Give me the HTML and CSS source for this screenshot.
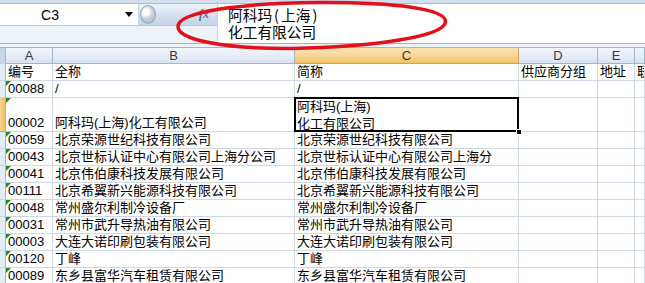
FILE: index.html
```html
<!DOCTYPE html>
<html lang="zh">
<head>
<meta charset="utf-8">
<title>Excel</title>
<link rel="stylesheet" href="styles.css">
</head>
<body>
<div class="app">
  <div class="formulabar">
    <div class="leftpane">
      <div class="namerow">
        <div class="namebox"><span class="ref">C3</span><span class="drop"></span></div>
        <div class="knobbar">
          <span class="knob"></span>
          <span class="fx">fx</span>
        </div>
      </div>
      <div class="below"></div>
    </div>
    <div class="input">
      <div>阿科玛<span class="p">(</span>上海<span class="p">)</span></div>
      <div>化工有限公司</div>
    </div>
  </div>
  <div class="gap"></div>
  <div class="sheet">
    <div class="rh corner"></div>
    <div class="ch">A</div>
    <div class="ch">B</div>
    <div class="ch chsel">C</div>
    <div class="ch">D</div>
    <div class="ch">E</div>
    <div class="ch"></div>

    <div class="rh"></div>
    <div class="c">编号</div><div class="c">全称</div><div class="c">简称</div><div class="c">供应商分组</div><div class="c">地址</div><div class="c">联系</div>

    <div class="rh"></div>
    <div class="c t">00088</div><div class="c">/</div><div class="c">/</div><div class="c"></div><div class="c"></div><div class="c"></div>

    <div class="rh rhsel tall"></div>
    <div class="c t tall">00002</div><div class="c tall">阿科玛(上海)化工有限公司</div><div class="c tall sel"><div class="wrap">阿科玛(上海)<br>化工有限公司</div><span class="handle"></span></div><div class="c tall"></div><div class="c tall"></div><div class="c tall"></div>

    <div class="rh"></div>
    <div class="c t">00059</div><div class="c">北京荣源世纪科技有限公司</div><div class="c">北京荣源世纪科技有限公司</div><div class="c"></div><div class="c"></div><div class="c"></div>

    <div class="rh"></div>
    <div class="c t">00043</div><div class="c">北京世标认证中心有限公司上海分公司</div><div class="c">北京世标认证中心有限公司上海分</div><div class="c"></div><div class="c"></div><div class="c"></div>

    <div class="rh"></div>
    <div class="c t">00041</div><div class="c">北京伟伯康科技发展有限公司</div><div class="c">北京伟伯康科技发展有限公司</div><div class="c"></div><div class="c"></div><div class="c"></div>

    <div class="rh"></div>
    <div class="c t">00111</div><div class="c">北京希翼新兴能源科技有限公司</div><div class="c">北京希翼新兴能源科技有限公司</div><div class="c"></div><div class="c"></div><div class="c"></div>

    <div class="rh"></div>
    <div class="c t">00048</div><div class="c">常州盛尔利制冷设备厂</div><div class="c">常州盛尔利制冷设备厂</div><div class="c"></div><div class="c"></div><div class="c"></div>

    <div class="rh"></div>
    <div class="c t">00031</div><div class="c">常州市武升导热油有限公司</div><div class="c">常州市武升导热油有限公司</div><div class="c"></div><div class="c"></div><div class="c"></div>

    <div class="rh"></div>
    <div class="c t">00003</div><div class="c">大连大诺印刷包装有限公司</div><div class="c">大连大诺印刷包装有限公司</div><div class="c"></div><div class="c"></div><div class="c"></div>

    <div class="rh"></div>
    <div class="c t">00120</div><div class="c">丁峰</div><div class="c">丁峰</div><div class="c"></div><div class="c"></div><div class="c"></div>

    <div class="rh"></div>
    <div class="c t">00089</div><div class="c">东乡县富华汽车租赁有限公司</div><div class="c">东乡县富华汽车租赁有限公司</div><div class="c"></div><div class="c"></div><div class="c"></div>
  </div>
  <svg class="mark" width="645" height="60" viewBox="0 0 645 60">
    <path d="M 318 2.5 C 395 2, 447 9, 445.5 22 C 444 37, 370 47, 292 48.5 C 225 49, 179 40, 178 27 C 177 12, 240 3, 318 2.5 Z" fill="none" stroke="#e3101b" stroke-width="3.5"/>
  </svg>
</div>
</body>
</html>
```
FILE: styles.css
```css
* { box-sizing: border-box; }
html, body { margin: 0; padding: 0; }
body {
  width: 645px;
  height: 283px;
  overflow: hidden;
  background: #ffffff;
  font-family: "Liberation Sans", "Noto Sans CJK SC", sans-serif;
  font-size: 13px;
  color: #000;
}
.app { position: relative; width: 645px; height: 283px; overflow: hidden; }

.formulabar {
  display: flex;
  height: 44px;
  background: #dde7f3;
  border-top: 3px solid #d3dfee;
  border-bottom: 1px solid #9fb3cf;
}
.leftpane {
  width: 217px;
  display: flex;
  flex-direction: column;
  border-top: 1px solid #a9bcd6;
}
.namerow { display: flex; height: 22px; border-bottom: 1px solid #b8c8de; }
.namebox {
  width: 139px;
  background: #fff;
  display: flex;
  align-items: center;
  border-right: 1px solid #c5d3e6;
}
.ref { width: 100px; text-align: center; font-size: 14px; color: #000; }
.drop {
  width: 0; height: 0;
  margin-left: 25px;
  border-left: 4px solid transparent;
  border-right: 4px solid transparent;
  border-top: 5px solid #000;
}
.knobbar {
  flex: 1;
  display: flex;
  align-items: center;
  background: linear-gradient(#eef3fa, #d2dff0 55%, #c3d3e9);
}
.knob {
  width: 16px; height: 19px;
  margin-left: 1px;
  border-radius: 50%;
  background: radial-gradient(circle at 35% 35%, #ffffff 0 20%, #c9d2dd 45%, #a6b1bf 100%);
  border: 1px solid #9aa6b6;
}
.fx {
  margin-left: auto;
  margin-right: 8px;
  font-family: "Liberation Serif", serif;
  font-style: italic;
  font-weight: bold;
  font-size: 12px;
  color: #5d6f8a;
}
.below { flex: 1; background: #eef3f9; }
.input {
  flex: 1;
  background: #fff;
  border-top: 1px solid #a9bcd6;
  border-left: 1px solid #c5d3e6;
  padding: 2px 0 0 10px;
  font-family: "Noto Sans CJK SC", sans-serif;
  font-size: 14.7px;
  line-height: 17px;
}
.p { margin: 0 2px; }
.gap { height: 3px; background: #eef3fa; }

.sheet {
  display: grid;
  grid-template-columns: 6px 47px 242px 224px 79px 37px 10px;
  grid-auto-rows: 17px;
}
.rh {
  background: #e4ecf7;
  border-right: 1px solid #9eb6ce;
  border-bottom: 1px solid #c5d3e3;
}
.corner { background: #c6d5ea; border-top: 1px solid #9eb6ce; }
.rhsel { background: linear-gradient(90deg, #f8d697, #f1c05c); border-bottom-color: #c8a25b; }
.ch {
  background: linear-gradient(#f2f6fb, #e4ecf7 60%, #d9e3f1);
  border-top: 1px solid #9eb6ce;
  border-right: 1px solid #9eb6ce;
  border-bottom: 1px solid #9eb6ce;
  text-align: center;
  color: #383838;
  font-size: 13px;
  line-height: 15px;
}
.chsel {
  background: linear-gradient(#fbe3b4, #f8d898 50%, #f1c15f);
  border-color: #c9a867;
  border-top-color: #9eb6ce;
}
.c {
  border-right: 1px solid #d0d7e5;
  border-bottom: 1px solid #d0d7e5;
  padding: 0 0 0 2px;
  white-space: nowrap;
  overflow: hidden;
  display: flex;
  align-items: flex-end;
  line-height: 16px;
  position: relative;
}
.tall { grid-row: span 2; }
.t::before {
  content: "";
  position: absolute;
  left: 0; top: 0;
  border-top: 5px solid #1f8a2b;
  border-right: 5px solid transparent;
}
.sel { overflow: visible; z-index: 2; align-items: stretch; }
.sel::after {
  content: "";
  position: absolute;
  left: -1px; top: -1px; right: -1px; bottom: -1px;
  border: 2px solid #000;
  pointer-events: none;
}
.wrap { line-height: 17px; }
.handle {
  position: absolute;
  right: -4px; bottom: -4px;
  width: 6px; height: 6px;
  background: #000;
  border: 1px solid #fff;
  z-index: 3;
}
.mark { position: absolute; left: 0; top: 0; pointer-events: none; }
```
